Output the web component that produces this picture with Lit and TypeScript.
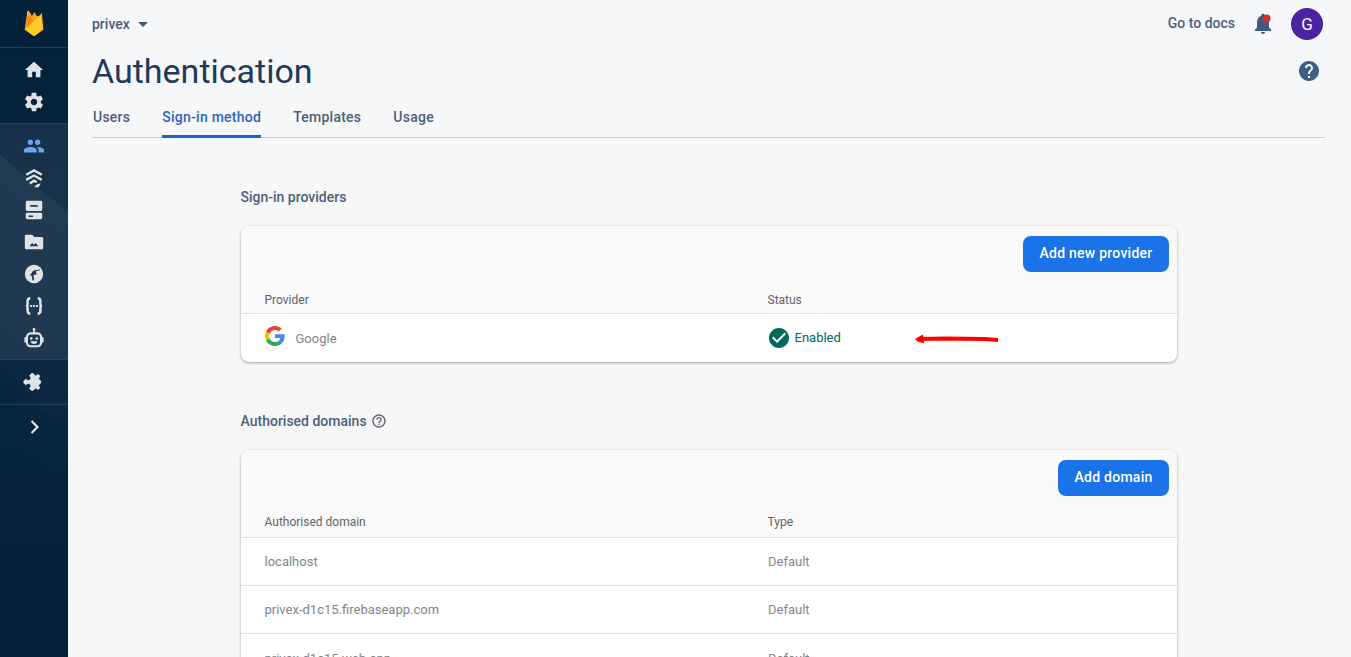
import { LitElement, html, css, svg } from "lit";
import { customElement } from "lit/decorators.js";

const icon = (d: unknown, color = "#dfe3e7") => html`<svg class="nav-icon" viewBox="0 0 24 24" fill="${color}">${d}</svg>`;

@customElement("app-root")
export class AppRoot extends LitElement {
  static styles = css`
    :host { display: flex; width: 100%; height: 100vh; overflow: hidden; background: #f6f7f9; font-family: Roboto, "Liberation Sans", sans-serif; }
    .side { width: 68px; flex: none; display: flex; flex-direction: column;
      background:
        linear-gradient(220.5deg, transparent 161.7px, rgba(255,255,255,.05) 161.7px, rgba(255,255,255,.025) 328px, rgba(255,255,255,.012) 328px, transparent 420px),
        linear-gradient(180deg, #04213a 0, #06233d 400px, #041f38 100%); }
    .logo { height: 48px; box-sizing: border-box; display: flex; align-items: center; justify-content: center; border-bottom: 1px solid #1e3a54; }
    .group { display: flex; flex-direction: column; align-items: center; }
    .g1 { height: 75px; padding-top: 11px; gap: 10px; box-sizing: border-box; }
    .g2 { height: 236px; box-sizing: border-box; padding-top: 11px; gap: 10px; border-top: 1px solid #2a4560; background: rgba(255,255,255,.07); }
    .g3 { height: 46px; box-sizing: border-box; justify-content: center; border-top: 1px solid #2a4560; border-bottom: 1px solid #223d57; }
    .g4 { padding-top: 11px; }
    .nav-icon { width: 22px; height: 22px; display: block; }
    .main { flex: 1; min-width: 0; padding: 0 26px 0 24px; }
    .top { display: flex; align-items: center; height: 47px; color: #3f5573; }
    .project { font-size: 14px; font-weight: 500; color: #4a5d75; }
    .caret { width: 0; height: 0; border: 5px solid transparent; border-top-color: #45586f; border-bottom: 0; margin-left: 8px; margin-top: 2px; }
    .spacer { flex: 1; }
    .docs { font-size: 14px; font-weight: 500; color: #4e6280; margin-right: 16px; margin-top: -1px; }
    .bell { width: 24px; height: 24px; margin-right: 16px; }
    .avatar { width: 32px; height: 32px; border-radius: 50%; background: #4a23a3; color: #fff; font-size: 17px; display: flex; align-items: center; justify-content: center; margin-right: 2px; }
    .head { display: flex; justify-content: space-between; align-items: center; height: 48px; }
    h1 { margin: 0; font-family: Roboto, sans-serif; font-weight: 400; font-size: 34px; color: #1c3a5a; }
    .help { width: 24px; height: 24px; margin-right: 4px; margin-top: -1px; }
    .tabs { display: flex; gap: 32px; height: 43px; box-sizing: border-box; border-bottom: 1px solid #c6ced8; padding-left: 1px; }
    .tab { font-size: 14px; font-weight: 500; color: #4d5f78; padding-top: 14px; letter-spacing: .25px; }
    .tab.on { color: #2f64bd; border-bottom: 3px solid #1a65c9; margin-bottom: -1px; border-radius: 1px; }
    .content { width: 936px; margin-left: 149px; }
    .sect { font-size: 14px; font-weight: 500; color: #4d5f78; display: flex; align-items: center; gap: 4px; height: 20px; margin-left: -.5px; }
    .s1 { margin-top: 49px; }
    .s2 { margin-top: 49px; }
    .card { background: #fff; border-radius: 8px; box-shadow: 0 1px 3px rgba(60,64,67,.35), 0 1px 2px rgba(60,64,67,.15); margin-top: 19px; overflow: hidden; }
    .cardtop { background: #fafafa; display: flex; justify-content: flex-end; padding: 10px 8px 0 0; height: 46px; box-sizing: border-box; }
    .btn { background: #1a73e8; color: #fff; font-size: 14px; font-weight: 500; border-radius: 8px; height: 36px; padding: 0 16.5px 2px; box-sizing: border-box; display: flex; align-items: center; letter-spacing: .25px; }
    .row { display: grid; grid-template-columns: 503px 1fr; padding-left: 23.5px; align-items: center; font-size: 13px; color: #80868b; }
    .thead { background: #fafafa; height: 42px; font-size: 12px; color: #5f6368; border-bottom: 1px solid #e0e0e0; box-sizing: border-box; padding-top: 15px; }
    .thead.t2 { padding-top: 10px; }
    .tbody { height: 48px; box-sizing: border-box; border-bottom: 1px solid #e0e0e0; }
    .tbody:last-child { border-bottom: 0; }
    .tbody > span:last-child { margin-left: .5px; }
    .g { display: flex; align-items: center; gap: 11px; }
    .g svg { width: 20px; height: 20px; margin-top: -4px; }
    .status { display: flex; align-items: center; gap: 4px; color: #00695c; position: relative; margin-left: -1px !important; }
    .status svg.ok { width: 24px; height: 24px; }
    .status-label { margin-bottom: 2px; }
    .arrow { position: absolute; left: 148px; top: 4px; width: 84px; height: 18px; }
    .q { width: 16px; height: 16px; }
  `;

  render() {
    const p = (d: string) => svg`<path d="${d}"/>`;
    return html`
      <aside class="side">
        <div class="logo">
          <svg width="22" height="27" viewBox="0 0 22 29">
            <path d="M1 21 L4 1 Q4.5 0 5.5 1 L9.5 8 L1 21Z" fill="#ffc24a"/>
            <path d="M1 21 L7 9 L11 3 Q11.5 2 12 3 L13.5 6 L16 7 L19.5 3 L21 21 L12 27 Q11 27.5 10 27 Z" fill="#ffa712"/>
            <path d="M1 21 L5 3 L11 12 Z" fill="#f58a0b"/>
            <path d="M1 21 L16 7 L17.6 5.5 Q18.2 5 18.4 5.6 L21 21 L12 27.6 Q11 28 10 27.6 Z" fill="#ffca28"/>
          </svg>
        </div>
        <div class="group g1">
          ${icon(p("M10 20v-6h4v6h5v-8h3L12 3 2 12h3v8z"))}
          ${icon(p("M19.43 12.98c.04-.32.07-.64.07-.98s-.03-.66-.07-.98l2.11-1.65c.19-.15.24-.42.12-.64l-2-3.46c-.12-.22-.39-.3-.61-.22l-2.49 1c-.52-.4-1.08-.73-1.69-.98l-.38-2.65C14.46 2.18 14.25 2 14 2h-4c-.25 0-.46.18-.49.42l-.38 2.65c-.61.25-1.17.59-1.69.98l-2.49-1c-.23-.09-.49 0-.61.22l-2 3.46c-.13.22-.07.49.12.64l2.11 1.65c-.04.32-.07.65-.07.98s.03.66.07.98l-2.11 1.65c-.19.15-.24.42-.12.64l2 3.46c.12.22.39.3.61.22l2.49-1c.52.4 1.08.73 1.69.98l.38 2.65c.03.24.24.42.49.42h4c.25 0 .46-.18.49-.42l.38-2.65c.61-.25 1.17-.59 1.69-.98l2.49 1c.23.09.49 0 .61-.22l2-3.46c.12-.22.07-.49-.12-.64l-2.11-1.65zM12 15.5c-1.93 0-3.5-1.57-3.5-3.5s1.57-3.5 3.5-3.5 3.5 1.57 3.5 3.5-1.57 3.5-3.5 3.5z"))}
        </div>
        <div class="group g2">
          ${icon(p("M16 11c1.66 0 2.99-1.34 2.99-3S17.66 5 16 5s-3 1.34-3 3 1.34 3 3 3zm-8 0c1.66 0 2.99-1.34 2.99-3S9.66 5 8 5 5 6.34 5 8s1.34 3 3 3zm0 2c-2.33 0-7 1.17-7 3.5V19h14v-2.5C15 14.17 10.33 13 8 13zm8 0c-.29 0-.62.02-.97.05 1.16.84 1.97 1.97 1.97 3.45V19h6v-2.5c0-2.33-4.67-3.5-7-3.5z"), "#6ea3f0")}
          ${icon(svg`<g fill="none" stroke="#dfe3e7" stroke-width="2.6"><path d="M3.5 8.5 L12 3.8 L20.5 8.5"/><path d="M3.5 14 L12 9.3 L20.5 14"/><path d="M7.5 18 L12 15 L15 16.5"/></g><path d="M12.5 22c1-2.4 3.5-4 7-4l-2.5 4z"/>`)}
          ${icon(svg`<path fill-rule="evenodd" d="M4.5 2h15A1.5 1.5 0 0 1 21 3.5v8A1.5 1.5 0 0 1 19.5 13h-15A1.5 1.5 0 0 1 3 11.5v-8A1.5 1.5 0 0 1 4.5 2zM8 6.5v2h8v-2zM4.5 15h15a1.5 1.5 0 0 1 1.5 1.5v4a1.5 1.5 0 0 1-1.5 1.5h-15A1.5 1.5 0 0 1 3 20.5v-4A1.5 1.5 0 0 1 4.5 15zM6 18v1.5h5V18z"/>`)}
          ${icon(svg`<path fill-rule="evenodd" d="M10 4H3.5C2.7 4 2 4.7 2 5.5v13c0 .8.7 1.5 1.5 1.5h17c.8 0 1.5-.7 1.5-1.500V8c0-.8-.7-1.500-1.500-1.500H12.500zM7 16.500l3-3.500 2 2 1.500-1.800 3.500 3.300z"/>`)}
          ${icon(svg`<circle cx="12" cy="12" r="10"/><path d="M18 7c-2 .3-3.500 .8-5.500 1.200-1.500 .4-2.500 1.200-2.800 2.600L7.500 13l2 1 .8 5 1.700-.3-.5-5.700 3.500-.5-1-3.500 4.500-1z" fill="#1a3652"/>`)}
          ${icon(svg`<path d="M8 3.500C5.300 3.500 5 5 5 7v3.500c0 .7-.6 1.300-1.500 1.500.9 .2 1.500 .8 1.500 1.500V17c0 2 .3 3.500 3 3.500M16 3.500c2.700 0 3 1.500 3 3.500v3.500c0 .7 .6 1.300 1.500 1.500-.9 .2-1.500 .8-1.500 1.500V17c0 2-.3 3.500-3 3.500" fill="none" stroke="#dfe3e7" stroke-width="2.700"/><rect x="7.500" y="11" width="2.400" height="2"/><rect x="10.800" y="11" width="2.400" height="2"/><rect x="14.100" y="11" width="2.400" height="2"/>`)}
          ${icon(svg`<rect x="11" y="3" width="2" height="4"/><circle cx="12" cy="2.500" r="1.500"/><rect x="4.300" y="7" width="15.400" height="14" rx="4" fill="none" stroke="#dfe3e7" stroke-width="2.300"/><rect x="1.500" y="11" width="2.500" height="6" rx="1"/><rect x="20" y="11" width="2.500" height="6" rx="1"/><circle cx="9" cy="12.500" r="1.400"/><circle cx="15" cy="12.500" r="1.400"/><path d="M8.500 15.500h7a3.500 3 0 0 1-7 0z"/>`)}
        </div>
        <div class="group g3">
          ${icon(svg`<g transform="rotate(45 12 12) translate(1.500 1.500) scale(.875)"><path d="M20.500 11H19V7c0-1.100-.9-2-2-2h-4V3.500C13 2.120 11.880 1 10.500 1S8 2.120 8 3.500V5H4c-1.100 0-2 .9-2 2v3.800h1.500c1.500 0 2.700 1.200 2.700 2.700s-1.200 2.700-2.700 2.700H2V20c0 1.100.9 2 2 2h3.800v-1.500c0-1.500 1.200-2.700 2.700-2.700s2.700 1.200 2.700 2.700V22H17c1.100 0 2-.9 2-2v-4h1.500c1.380 0 2.500-1.120 2.500-2.500S21.880 11 20.500 11z"/></g>`)}
        </div>
        <div class="group g4">
          ${icon(p("M8.500 6.400 10.200 4.700 17.500 12 10.200 19.300 8.500 17.600 14.100 12z"))}
        </div>
      </aside>
      <main class="main">
        <div class="top">
          <span class="project">privex</span><span class="caret"></span>
          <span class="spacer"></span>
          <span class="docs">Go to docs</span>
          <span class="bell">
            <svg viewBox="0 0 24 24" fill="#3f5b82" width="24" height="24"><path d="M12 22c1.100 0 2-.9 2-2h-4c0 1.100.9 2 2 2zm8-4.500v1.500H4v-1.500l2-2v-5.500c0-3 1.800-5.600 4.500-6.300V3a1.500 1.500 0 0 1 3 0v.7c2.700.7 4.500 3.300 4.500 6.300v5.500z"/><circle cx="15.500" cy="6.500" r="4" fill="#d32f2f"/></svg>
          </span>
          <span class="avatar">G</span>
        </div>
        <div class="head">
          <h1>Authentication</h1>
          <svg class="help" viewBox="0 0 24 24" fill="#3f5f85"><path d="M12 2C6.480 2 2 6.480 2 12s4.480 10 10 10 10-4.480 10-10S17.520 2 12 2zm1 17h-2v-2h2v2zm2.070-7.750-.9.920C13.450 12.900 13 13.500 13 15h-2v-.5c0-1.100.45-2.100 1.170-2.830l1.240-1.260c.37-.36.59-.86.59-1.410 0-1.100-.9-2-2-2s-2 .9-2 2H8c0-2.210 1.790-4 4-4s4 1.790 4 4c0 .88-.36 1.680-.93 2.250z"/></svg>
        </div>
        <nav class="tabs">
          <span class="tab">Users</span>
          <span class="tab on">Sign-in method</span>
          <span class="tab">Templates</span>
          <span class="tab">Usage</span>
        </nav>
        <div class="content">
          <div class="sect s1">Sign-in providers</div>
          <section class="card">
            <div class="cardtop"><span class="btn">Add new provider</span></div>
            <div class="row thead"><span>Provider</span><span>Status</span></div>
            <div class="row tbody">
              <span class="g">
                <svg viewBox="0 0 48 48"><path fill="#EA4335" d="M24 9.500c3.500 0 6.700 1.200 9.200 3.600l6.900-6.900C35.900 2.400 30.500 0 24 0 14.600 0 6.500 5.400 2.600 13.200l8 6.200C12.500 13.700 17.800 9.500 24 9.500z"/><path fill="#4285F4" d="M46.980 24.550c0-1.570-.15-3.090-.38-4.550H24v9.020h12.940c-.58 2.960-2.260 5.480-4.780 7.180l7.730 6c4.510-4.180 7.090-10.360 7.090-17.650z"/><path fill="#FBBC05" d="M10.530 28.590c-.48-1.450-.76-2.990-.76-4.590s.27-3.140.76-4.590l-7.980-6.190C.92 16.460 0 20.120 0 24c0 3.880.92 7.540 2.560 10.780l7.970-6.190z"/><path fill="#34A853" d="M24 48c6.480 0 11.930-2.130 15.890-5.810l-7.730-6c-2.150 1.450-4.920 2.300-8.160 2.300-6.260 0-11.570-4.220-13.470-9.910l-7.980 6.190C6.510 42.620 14.620 48 24 48z"/></svg>
                <span>Google</span>
              </span>
              <span class="status">
                <svg class="ok" viewBox="0 0 24 24" fill="#00695c"><path d="M12 2C6.480 2 2 6.480 2 12s4.480 10 10 10 10-4.480 10-10S17.520 2 12 2zm-2 15-5-5 1.410-1.410L10 14.170l7.590-7.590L19 8z"/></svg>
                <span class="status-label">Enabled</span>
                <svg class="arrow" viewBox="0 0 84 18"><path d="M3 9 L30 8.500 L70 9 L83 10" stroke="#f00" stroke-width="4" fill="none"/><path d="M0 9 L8 4.500 L9 13 L3 12 Z" fill="#f00"/></svg>
              </span>
            </div>
          </section>
          <div class="sect s2">Authorised domains
            <svg class="q" viewBox="0 0 24 24" fill="#5f6368"><path d="M11 18h2v-2h-2v2zm1-16C6.480 2 2 6.480 2 12s4.480 10 10 10 10-4.480 10-10S17.520 2 12 2zm0 18c-4.410 0-8-3.590-8-8s3.590-8 8-8 8 3.590 8 8-3.590 8-8 8zm0-14c-2.210 0-4 1.790-4 4h2c0-1.100.9-2 2-2s2 .9 2 2c0 2-3 1.750-3 5h2c0-2.250 3-2.500 3-5 0-2.210-1.790-4-4-4z"/></svg>
          </div>
          <section class="card">
            <div class="cardtop"><span class="btn">Add domain</span></div>
            <div class="row thead t2"><span>Authorised domain</span><span>Type</span></div>
            <div class="row tbody"><span>localhost</span><span>Default</span></div>
            <div class="row tbody"><span>privex-d1c15.firebaseapp.com</span><span>Default</span></div>
            <div class="row tbody"><span>privex-d1c15.web.app</span><span>Default</span></div>
          </section>
        </div>
      </main>
    `;
  }
}
